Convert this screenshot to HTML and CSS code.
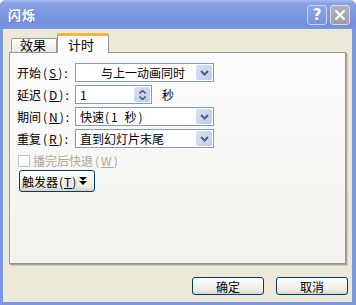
FILE: index.html
```html
<!DOCTYPE html>
<html lang="zh-CN">
<head>
    <meta charset="UTF-8">
    <title>闪烁</title>
    <link rel="stylesheet" href="styles.css">
</head>
<body>
    <div class="window">
        <div class="titlebar">
            <span class="title">闪烁</span>
            <div class="caption-btns">
                <div class="cap-btn help">?</div>
                <div class="cap-btn close">
                    <svg width="12" height="12" viewBox="0 0 12 12"><path d="M1.5 1.5l9 9M10.5 1.5l-9 9" stroke="#fff" stroke-width="2.2" fill="none"/></svg>
                </div>
            </div>
        </div>

        <div class="client">
            <div class="tabs">
                <div class="tab">效果</div>
                <div class="tab active">计时</div>
            </div>

            <div class="panel">
                <div class="row">
                    <span class="label">开始<span class="key">(<u>S</u>)</span>:</span>
                    <div class="combo wide">
                        <span class="combo-text center">与上一动画同时</span>
                        <span class="drop"><svg width="9" height="6" viewBox="0 0 9 6"><path d="M1 1l3.5 3.5L8 1" stroke="#4d6185" stroke-width="2" fill="none"/></svg></span>
                    </div>
                </div>
                <div class="row">
                    <span class="label">延迟<span class="key">(<u>D</u>)</span>:</span>
                    <div class="combo spin">
                        <span class="combo-text">1</span>
                        <span class="spin-btns">
                            <svg width="7" height="4" viewBox="0 0 7 4"><path d="M0.5 3.5l3-3 3 3" stroke="#4d6185" stroke-width="1.6" fill="none"/></svg>
                            <svg width="7" height="4" viewBox="0 0 7 4"><path d="M0.5 0.5l3 3 3-3" stroke="#4d6185" stroke-width="1.6" fill="none"/></svg>
                        </span>
                    </div>
                    <span class="unit">秒</span>
                </div>
                <div class="row">
                    <span class="label">期间<span class="key">(<u>N</u>)</span>:</span>
                    <div class="combo wide">
                        <span class="combo-text">快速<span class="key">(1 秒)</span></span>
                        <span class="drop"><svg width="9" height="6" viewBox="0 0 9 6"><path d="M1 1l3.5 3.5L8 1" stroke="#4d6185" stroke-width="2" fill="none"/></svg></span>
                    </div>
                </div>
                <div class="row last">
                    <span class="label">重复<span class="key">(<u>R</u>)</span>:</span>
                    <div class="combo wide">
                        <span class="combo-text">直到幻灯片末尾</span>
                        <span class="drop"><svg width="9" height="6" viewBox="0 0 9 6"><path d="M1 1l3.5 3.5L8 1" stroke="#4d6185" stroke-width="2" fill="none"/></svg></span>
                    </div>
                </div>

                <div class="check disabled">
                    <span class="box"></span>
                    <span>播完后快退<span class="key">(<u>W</u>)</span></span>
                </div>

                <div class="xp-btn trigger">
                    <span>触发器<span class="key">(<u>T</u>)</span></span>
                    <svg width="8" height="8" viewBox="0 0 8 8"><path d="M0 0h8L4 3.5z M0 4h8L4 8z" fill="#000"/></svg>
                </div>
            </div>

            <div class="actions">
                <div class="xp-btn">确定</div>
                <div class="xp-btn">取消</div>
            </div>
        </div>
    </div>
</body>
</html>
```

FILE: styles.css
```css
* {
    margin: 0;
    padding: 0;
    box-sizing: border-box;
}

body {
    font-family: "Noto Sans CJK SC", "DejaVu Sans", sans-serif;
    font-size: 12px;
    color: #000;
    background: #fff;
}

u {
    text-decoration: underline;
}

/* parenteses mais largos, como na fonte bitmap */
.key {
    letter-spacing: 2px;
    margin-left: 2px;
}

.window {
    width: 356px;
    height: 305px;
    background: #7b97df;
    border-radius: 6px 6px 0 0;
    display: flex;
    flex-direction: column;
    overflow: hidden;
}

/* barra de titulo */
.titlebar {
    height: 29px;
    flex: none;
    display: flex;
    align-items: center;
    justify-content: space-between;
    padding: 0 6px 0 8px;
    background: linear-gradient(#a7bbee, #87a1e3 12%, #7a96df 50%, #7591dc 90%, #7b97df);
}

.title {
    color: #fff;
    font-size: 13px;
    font-weight: bold;
    letter-spacing: 1px;
    text-shadow: 1px 1px 0 #6a84c8;
}

.caption-btns {
    display: flex;
    gap: 3px;
}

.cap-btn {
    width: 20px;
    height: 20px;
    border: 1px solid #c8d4f2;
    border-radius: 3px;
    display: flex;
    align-items: center;
    justify-content: center;
    color: #fff;
    font-family: "DejaVu Sans", sans-serif;
    font-weight: bold;
    font-size: 15px;
}

.help {
    background: linear-gradient(#8ea6e6, #7591dc);
}

.close {
    background: linear-gradient(#b0b0b8, #9d9da6);
    border-color: #dcdce0;
}

/* area interna */
.client {
    flex: 1;
    margin: 0 4px 3px 3px;
    background: #ece9d8;
    display: flex;
    flex-direction: column;
}

.tabs {
    display: flex;
    align-items: flex-end;
    padding: 5px 0 0 8px;
    height: 23px;
    flex: none;
    position: relative;
    z-index: 1;
}

.tab {
    height: 14px;
    width: 46px;
    border: 1px solid #919b9c;
    border-bottom: none;
    border-radius: 2px 2px 0 0;
    background: linear-gradient(#fff, #f3f3ef 60%, #e8e7e0);
    display: flex;
    align-items: flex-end;
    padding: 0 0 0 8px;
    line-height: 14px;
    font-size: 13px;
}

.tab.active {
    width: 52px;
    background: #fcfcfe;
    border-top: 3px solid #f5b341;
    padding: 0 0 0 10px;
    margin-bottom: -1px;
    height: 20px;
    align-items: center;
}

.panel {
    height: 212px;
    margin: 0 6px 0 6px;
    border: 1px solid #919b9c;
    box-shadow: 1px 1px 0 #aca899, 2px 2px 0 #d0ccbb;
    background: linear-gradient(#fcfcfe, #f6f5f1 70%, #f2f1ea);
    padding: 10px 0 0 7px;
    display: flex;
    flex-direction: column;
    align-items: flex-start;
}

.row {
    display: flex;
    align-items: center;
    height: 19px;
    margin-bottom: 3px;
}

.row.last {
    margin-bottom: 6px;
}

.label {
    width: 58px;
    white-space: nowrap;
}

.combo {
    height: 19px;
    border: 1px solid #7f9db9;
    background: #fff;
    display: flex;
    align-items: center;
    justify-content: space-between;
    padding: 0 1px 0 4px;
}

.combo.wide {
    width: 139px;
}

.combo.spin {
    width: 77px;
}

.combo-text {
    white-space: nowrap;
}

.combo-text .key {
    margin-left: 1px;
}

.combo-text.center {
    padding-left: 21px;
}

.drop {
    width: 16px;
    height: 15px;
    background: linear-gradient(135deg, #d9e2f3, #c1cbe8);
    border-radius: 2px;
    display: flex;
    align-items: center;
    justify-content: center;
}

.spin-btns {
    width: 16px;
    height: 15px;
    background: linear-gradient(135deg, #d9e2f3, #bfcae8);
    border-radius: 2px;
    display: flex;
    flex-direction: column;
    align-items: center;
    justify-content: center;
    gap: 2px;
}

.unit {
    margin-left: 10px;
}

.check {
    display: flex;
    align-items: center;
    gap: 3px;
    margin-left: 1px;
    height: 13px;
}

.check.disabled {
    color: #aca899;
}

.box {
    width: 12px;
    height: 12px;
    border: 1px solid #cac8bb;
    background: #fff;
}

.xp-btn {
    border: 1px solid #003c74;
    border-radius: 3px;
    background: linear-gradient(#fff, #f5f4ef 40%, #ebe9e1 80%, #d6d0c5);
    display: flex;
    align-items: center;
    justify-content: center;
}

.trigger {
    width: 76px;
    height: 22px;
    margin: 3px 0 0 2px;
    gap: 2px;
    justify-content: flex-start;
    padding-left: 2px;
}

.trigger .key {
    letter-spacing: 1px;
    margin-left: 1px;
}

.actions {
    display: flex;
    justify-content: flex-end;
    gap: 12px;
    padding: 13px 4px 0 0;
}

.actions .xp-btn {
    width: 72px;
    height: 18px;
}
```
